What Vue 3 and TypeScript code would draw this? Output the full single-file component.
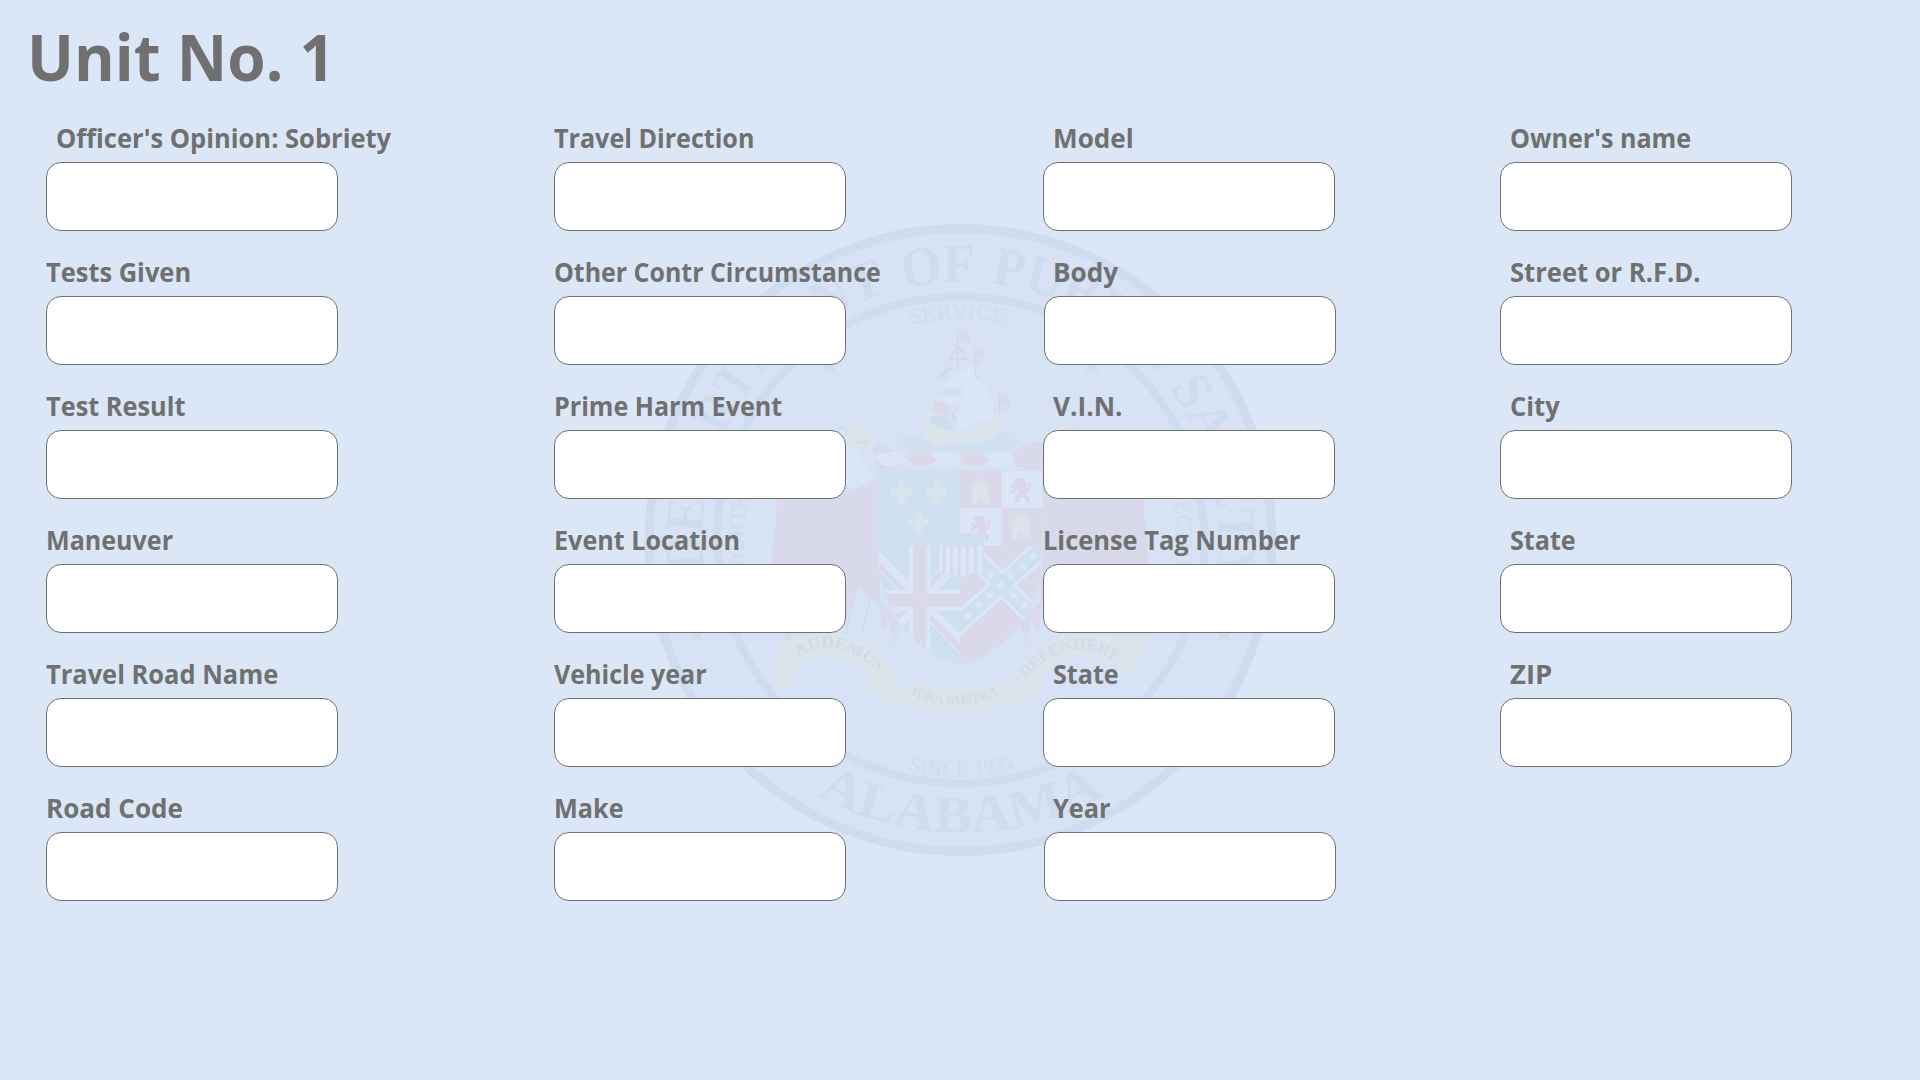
<script setup lang="ts">
interface Field {
  label: string
  // horizontal condensing of the label face
  fit: number
  indent?: boolean
  nudge?: boolean
}

const columns: { name: string; fields: Field[] }[] = [
  {
    name: 'sobriety',
    fields: [
      { label: "Officer's Opinion: Sobriety", fit: 0.928, indent: true },
      { label: 'Tests Given', fit: 0.925 },
      { label: 'Test Result', fit: 0.921 },
      { label: 'Maneuver', fit: 0.912 },
      { label: 'Travel Road Name', fit: 0.925 },
      { label: 'Road Code', fit: 0.947 },
    ],
  },
  {
    name: 'event',
    fields: [
      { label: 'Travel Direction', fit: 0.913 },
      { label: 'Other Contr Circumstance', fit: 0.907 },
      { label: 'Prime Harm Event', fit: 0.912 },
      { label: 'Event Location', fit: 0.915 },
      { label: 'Vehicle year', fit: 0.911 },
      { label: 'Make', fit: 0.918 },
    ],
  },
  {
    name: 'vehicle',
    fields: [
      { label: 'Model', fit: 0.95, indent: true },
      { label: 'Body', fit: 0.95, indent: true, nudge: true },
      { label: 'V.I.N.', fit: 0.955, indent: true },
      { label: 'License Tag Number', fit: 0.925 },
      { label: 'State', fit: 0.914, indent: true },
      { label: 'Year', fit: 0.92, indent: true, nudge: true },
    ],
  },
  {
    name: 'owner',
    fields: [
      { label: "Owner's name", fit: 0.913, indent: true },
      { label: 'Street or R.F.D.', fit: 0.93, indent: true },
      { label: 'City', fit: 0.93, indent: true },
      { label: 'State', fit: 0.914, indent: true },
      { label: 'ZIP', fit: 1, indent: true },
    ],
  },
]

const star = (cx: number, cy: number, r: number): string =>
  Array.from({ length: 10 }, (_, i) => {
    const a = (Math.PI / 5) * i - Math.PI / 2
    const d = i % 2 ? r * 0.4 : r
    return `${(cx + d * Math.cos(a)).toFixed(1)},${(cy + d * Math.sin(a)).toFixed(1)}`
  }).join(' ')

const saltireStars = [
  [390, 437], [453, 437], [487, 408], [520, 380], [423, 467],
  [390, 495], [357, 525], [323, 557], [460, 495], [493, 525],
]
const lilies = [[123, 188], [230, 188], [176, 278]]
const castles = [[361, 185], [483, 290]]
const lions = [[483, 182], [361, 295]]
const wreath = [
  [500, 'red'], [418, 'pale'], [340, 'red'], [257, 'pale'], [183, 'red'], [93, 'pale'],
] as [number, string][]
</script>

<template>
  <main class="page">
    <svg class="seal" viewBox="640 220 640 640" aria-hidden="true">
      <defs>
        <path id="ringTop" d="M960.5 798 A258 258 0 0 1 960.5 282 A258 258 0 0 1 960.5 798" />
        <path id="ringBottom" d="M668 540 A292.5 292.5 0 0 0 1253 540" />
        <path id="innerTop" d="M960.5 761 A221 221 0 0 1 960.5 319 A221 221 0 0 1 960.5 761" />
        <path id="innerSide" d="M960.5 757 A217 217 0 0 1 960.5 323 A217 217 0 0 1 960.5 757" />
        <path id="innerBottom" d="M723.5 540 A237 237 0 0 0 1197.500 540" />
        <path id="mottoLeft" d="M503 350 Q622 278 742 396" />
        <path id="mottoMid" d="M148 794 Q283 852 418 792" />
        <path id="mottoRight" d="M195 415 Q325 270 470 366" />
        <clipPath id="shieldClip">
          <path d="M56 122H546V350C546 540 450 660 300 703C150 660 56 540 56 350Z" />
        </clipPath>
        <clipPath id="jackClip"><rect x="50" y="348" width="250" height="360" /></clipPath>
        <clipPath id="saltireClip"><rect x="300" y="348" width="250" height="360" /></clipPath>
      </defs>

      <circle class="disc" cx="960.5" cy="540" r="312" />
      <circle class="ring" cx="960.5" cy="540" r="311.5" stroke-width="9" />
      <circle class="ring" cx="960.5" cy="540" r="243.5" stroke-width="8" />

      <g class="lettering">
        <text font-size="55" text-anchor="middle" word-spacing="5"><textPath href="#ringTop" startOffset="50.35%" textLength="884" lengthAdjust="spacingAndGlyphs">DEPARTMENT OF PUBLIC SAFETY</textPath></text>
        <text font-size="53" text-anchor="middle"><textPath href="#ringBottom" startOffset="50%" textLength="300" lengthAdjust="spacingAndGlyphs">ALABAMA</textPath></text>
      </g>
      <g class="lettering faint">
        <text font-size="22" text-anchor="middle"><textPath href="#innerTop" startOffset="49.8%" textLength="95" lengthAdjust="spacingAndGlyphs">SERVICE</textPath></text>
        <text font-size="22" text-anchor="middle"><textPath href="#innerSide" startOffset="26%" textLength="112" lengthAdjust="spacingAndGlyphs">COURTESY</textPath></text>
        <text font-size="22" text-anchor="middle"><textPath href="#innerSide" startOffset="73%" textLength="135" lengthAdjust="spacingAndGlyphs">PROTECTION</textPath></text>
        <text font-size="23" text-anchor="middle"><textPath href="#innerBottom" startOffset="50.1%" textLength="108" lengthAdjust="spacingAndGlyphs">SINCE 1935</textPath></text>
      </g>

      <polygon class="star" :points="star(829, 365, 10.5)" />
      <polygon class="star" :points="star(1092, 365, 10.5)" />
      <polygon class="star red" :points="star(697, 633, 11)" />
      <polygon class="star red" :points="star(1224, 633, 11)" />
      <polygon class="star red" :points="star(740.5, 704, 10)" />
      <polygon class="star red" :points="star(1181, 704, 10)" />

      <!-- eagles; the right one mirrors the left -->
      <g v-for="side in 2" :key="side" :transform="side === 2 ? 'translate(1920.5 0) scale(-1 1)' : undefined">
        <path class="rose" d="M777 478L776 520Q771 545 772 575Q774 615 788 643L800 625L830 632L845 622L857 586L880 608L882 634L890 618L893 646L901 625L880 600V478L872 448Q874 440 885 445L905 463L878 480L838 496L815 486Z" />
        <path class="pale" d="M812 440Q825 430 842 430L858 452L874 480L864 476L866 484L855 480L856 489L846 484L840 495L832 484Z" />
        <path class="seam" d="M775 534L785 526L790 532L797 519L803 526L812 514L818 522L828 508M832 490Q830 540 834 580M857 588Q850 610 846 634M870 600L862 632" />
        <path class="gold" d="M846 428Q862 422 875 432Q880 442 868 449Q852 452 845 444Z" />
        <path class="rose" d="M853 443Q862 438 872 440Q864 447 853 443Z" />
        <circle class="seam" cx="842.5" cy="432" r="4" />
      </g>

      <!-- ship -->
      <g transform="translate(860 310) scale(.3333)">
        <path class="water" d="M95 405L125 390L105 370L160 375L200 362L430 365L485 375L455 385L490 395L460 410L470 425L360 430L250 428L150 430L125 415Z" />
        <path class="red" d="M296 58Q315 60 331 72V97Q315 88 296 93ZM348 115Q365 118 375 126L368 150Q358 140 348 142ZM420 252Q436 252 450 262V286Q435 280 420 284ZM224 270L265 285L255 330L222 302Z" />
        <path class="mast" d="M293 58V185M270 148L293 105L322 148ZM347 115V208M322 155H366M418 252V322M398 298H440M234 205L280 170M262 165L250 205M258 240L292 252M256 250L292 240M262 285V340M292 285L272 340M265 290L290 335" />
        <path class="pale" d="M240 228L335 172Q345 178 345 205L385 238V270L400 275L395 330L340 342L285 360L310 285Q270 288 225 262L310 258L312 235Z" />
        <path class="gold" d="M200 310Q225 300 250 318L262 345Q290 372 330 355Q400 350 430 310Q425 380 360 400L325 392L285 400L230 410L180 378Q195 345 200 310Z" />
        <path class="cove" d="M208 325Q225 310 250 322Q280 335 280 362Q220 360 208 325Z" />
        <path class="seam" d="M325 365Q375 370 415 335M320 380Q370 390 405 355" />
      </g>

      <!-- shield -->
      <g transform="translate(860 430) scale(.3333)">
        <path class="rose" d="M470 110L455 70Q510 30 548 38V112Z" />
        <path
          v-for="[x, tone] in wreath"
          :key="x"
          :class="tone"
          :d="`M${x - 50} 80Q${x - 20} 62 ${x + 12} 67Q${x + 38} 74 ${x + 48} 90Q${x + 20} 112 ${x - 8} 109Q${x - 36} 104 ${x - 50} 80Z`"
        />
        <path class="edge" d="M54 120H548V350C548 540 450 660 300 704C150 660 54 540 54 350Z" />
        <g clip-path="url(#shieldClip)">
          <rect class="blue" x="50" y="120" width="250" height="228" />
          <rect class="red" x="300" y="120" width="250" height="600" />
          <rect class="pale" x="425" y="120" width="125" height="114" />
          <rect class="pale" x="300" y="234" width="125" height="114" />
          <g clip-path="url(#jackClip)">
            <rect class="blue" x="50" y="348" width="250" height="360" />
            <path class="line-pale" stroke-width="42" d="M23 358L323 666M323 358L23 666" />
            <path class="line-red" stroke-width="16" d="M17 364L317 672M317 352L17 660" />
            <path class="line-pale" stroke-width="63" d="M178.500 340V720M40 511.500H310" />
            <path class="line-red" stroke-width="40" d="M178.500 340V720M40 511.500H310" />
          </g>
          <g clip-path="url(#saltireClip)">
            <path class="line-pale" stroke-width="62" d="M275 599L580 326M335 372L535 576" />
            <path class="line-blue" stroke-width="44" d="M275 599L580 326M335 372L535 576" />
            <polygon v-for="([x, y], i) in saltireStars" :key="i" class="pale" :points="star(x, y, 18)" />
          </g>
        </g>
        <path
          v-for="([x, y], i) in lilies"
          :key="'l' + i"
          class="gold"
          :transform="`translate(${x} ${y})`"
          d="M0-43Q10-30 11-18Q8-8 7 3Q10-17 24-15Q34-8 33 2Q30 12 20 10Q24 0 18 0Q12 4 13 12H17V20H9Q13 32 4 34L0 43L-4 34Q-13 32-9 20H-17V12H-13Q-12 4-18 0Q-24 0-20 10Q-30 12-33 2Q-34-8-24-15Q-10-17-7 3Q-8-8-11-18Q-10-30 0-43Z"
        />
        <path
          v-for="([x, y], i) in castles"
          :key="'c' + i"
          class="gold"
          :transform="`translate(${x} ${y})`"
          d="M-29 36V22L-23 16V-4L-28-8V-22H-20V-16H-15V-34H-8V-28H-4V-41H4V-28H8V-34H15V-16H20V-22H28V-8L23-4V16L29 22V36H8V22Q0 12-8 22V36Z"
        />
        <path
          v-for="([x, y], i) in lions"
          :key="'n' + i"
          class="lion"
          :transform="`translate(${x} ${y})`"
          d="M-18-32Q-10-40 2-38Q14-34 16-22L18-6Q24-10 20-20Q22-30 30-26Q34-20 28-14Q32 0 18 6L16 14L26 24L24 38H12L16 28L4 20L-4 22L-6 34L-22 36L-18 28L-14 14L-6 6L-10 0L-24 8L-32 2L-20-6L-30-12L-28-20L-14-14L-8-18L-20-22Z"
        />
        <path class="pale" d="M238 345H368V430Q335 425 302 446Q270 425 238 430Z" />
        <path class="line-red" stroke-width="10" d="M252 348V432M275 348V438M298 348V443M322 348V438M346 348V432" />
        <path class="blue" d="M236 312H370V348H236Z" />
        <path class="edge thin" d="M236 312H370V432Q335 425 302 446Q270 425 236 432Z" />
        <!-- centre ribbon -->
        <path class="gold soft" d="M30 735L100 765L145 775L158 832Q60 825 20 770ZM538 735L470 765L423 775L412 832Q510 825 550 768Z" />
        <path class="gold" d="M143 748Q285 808 425 748V820Q285 880 143 820Z" />
        <text class="motto" font-size="40"><textPath href="#mottoMid" textLength="276" lengthAdjust="spacingAndGlyphs">JURA NOSTRA</textPath></text>
      </g>

      <!-- side ribbons -->
      <g transform="translate(630 540) scale(.3333)">
        <path class="gold" d="M425 375Q430 330 470 305Q640 210 800 400L755 445Q630 300 490 375Q520 395 490 435L440 445Z" />
        <path class="seam" d="M440 345Q470 330 480 365L450 385" />
        <text class="motto" font-size="50"><textPath href="#mottoLeft" textLength="266" lengthAdjust="spacingAndGlyphs">AUDEMUS</textPath></text>
      </g>
      <g transform="translate(960 540) scale(.3333)">
        <path class="gold" d="M158 400Q310 215 480 290Q520 270 560 295Q575 320 550 345L520 390H490Q350 290 215 430Z" />
        <path class="seam" d="M490 290Q500 330 535 320L545 300" />
        <text class="motto" font-size="48"><textPath href="#mottoRight" textLength="312" lengthAdjust="spacingAndGlyphs">DEFENDERE</textPath></text>
      </g>
    </svg>

    <h1 class="title"><span class="title-text">Unit No. 1</span></h1>
    <form class="columns" @submit.prevent>
      <div v-for="column in columns" :key="column.name" class="column" :class="column.name">
        <label v-for="field in column.fields" :key="field.label" class="field">
          <span
            class="label"
            :class="{ indent: field.indent }"
            :style="{ transform: `scaleX(${field.fit})` }"
          >{{ field.label }}</span>
          <input class="box" :class="{ nudge: field.nudge }" type="text" />
        </label>
      </div>
    </form>
  </main>
</template>

<style>
body {
  margin: 0;
  background: #dbe7f7;
}
</style>

<style scoped>
.page {
  position: relative;
  width: 1920px;
  height: 1080px;
  overflow: hidden;
  background: #dbe7f7;
  color: #707070;
  font-family: "Open Sans", "Noto Sans", sans-serif;
}

.title {
  position: relative;
  margin: 0;
  padding: 12px 0 0 27px;
  height: 106px;
  box-sizing: border-box;
  font-size: 64px;
  line-height: 90px;
  font-weight: 700;
  white-space: nowrap;
}

.title-text {
  display: inline-block;
  transform: scaleX(0.97);
  transform-origin: left center;
}

.columns {
  position: relative;
  display: flex;
  align-items: flex-start;
  padding: 12px 0 0 46px;
}

.column {
  display: flex;
  flex-direction: column;
  gap: 21px;
  box-sizing: border-box;
}

.sobriety { width: 508px; }
.event { width: 489px; }
.vehicle { width: 457px; }
.owner { width: 292px; }

.field {
  display: flex;
  flex-direction: column;
  align-items: flex-start;
  gap: 7px;
}

.label {
  height: 37px;
  font-size: 27.5px;
  line-height: 40px;
  font-weight: 700;
  white-space: nowrap;
  transform-origin: left center;
}

.indent { margin-left: 10px; }

.box {
  box-sizing: border-box;
  width: 292px;
  height: 69px;
  margin: 0;
  padding: 0 16px;
  border: 1px solid #707070;
  border-radius: 15px;
  background: #fff;
  color: inherit;
  font: inherit;
  font-size: 24px;
  outline: none;
}

.nudge { margin-left: 1px; }

.seal {
  position: absolute;
  left: 640px;
  top: 220px;
  width: 640px;
  height: 640px;
}

.disc { fill: #d7e2f4; }
.ring { fill: none; stroke: #cfdcef; }
.lettering {
  fill: #cfdcef;
  font-family: "Liberation Serif", serif;
  font-weight: 700;
}
.faint { fill: #d0ddee; }
.motto {
  fill: #cddbeb;
  font-family: "Liberation Serif", serif;
  font-weight: 700;
}
.star { fill: #cfdcef; }
.red, .star.red { fill: #dad9e9; }
.rose { fill: #d8daeb; }
.blue { fill: #cedff0; }
.pale { fill: #dbe7f8; }
.gold { fill: #dae4ea; }
.soft { fill: #d8e3ea; }
.water { fill: #d0e0f1; }
.cove { fill: #cfdcee; }
.lion { fill: #d8d8e8; }
.line-pale { fill: none; stroke: #dbe7f8; }
.line-red { fill: none; stroke: #dad9e9; }
.line-blue { fill: none; stroke: #cedff0; }
.mast { fill: none; stroke: #d2d8e8; stroke-width: 5; }
.seam { fill: none; stroke: #d0dbea; stroke-width: 1.5; }
.edge { fill: none; stroke: #d3e0f2; stroke-width: 5; }
.thin { stroke-width: 4; stroke: #d0dff0; }
</style>
